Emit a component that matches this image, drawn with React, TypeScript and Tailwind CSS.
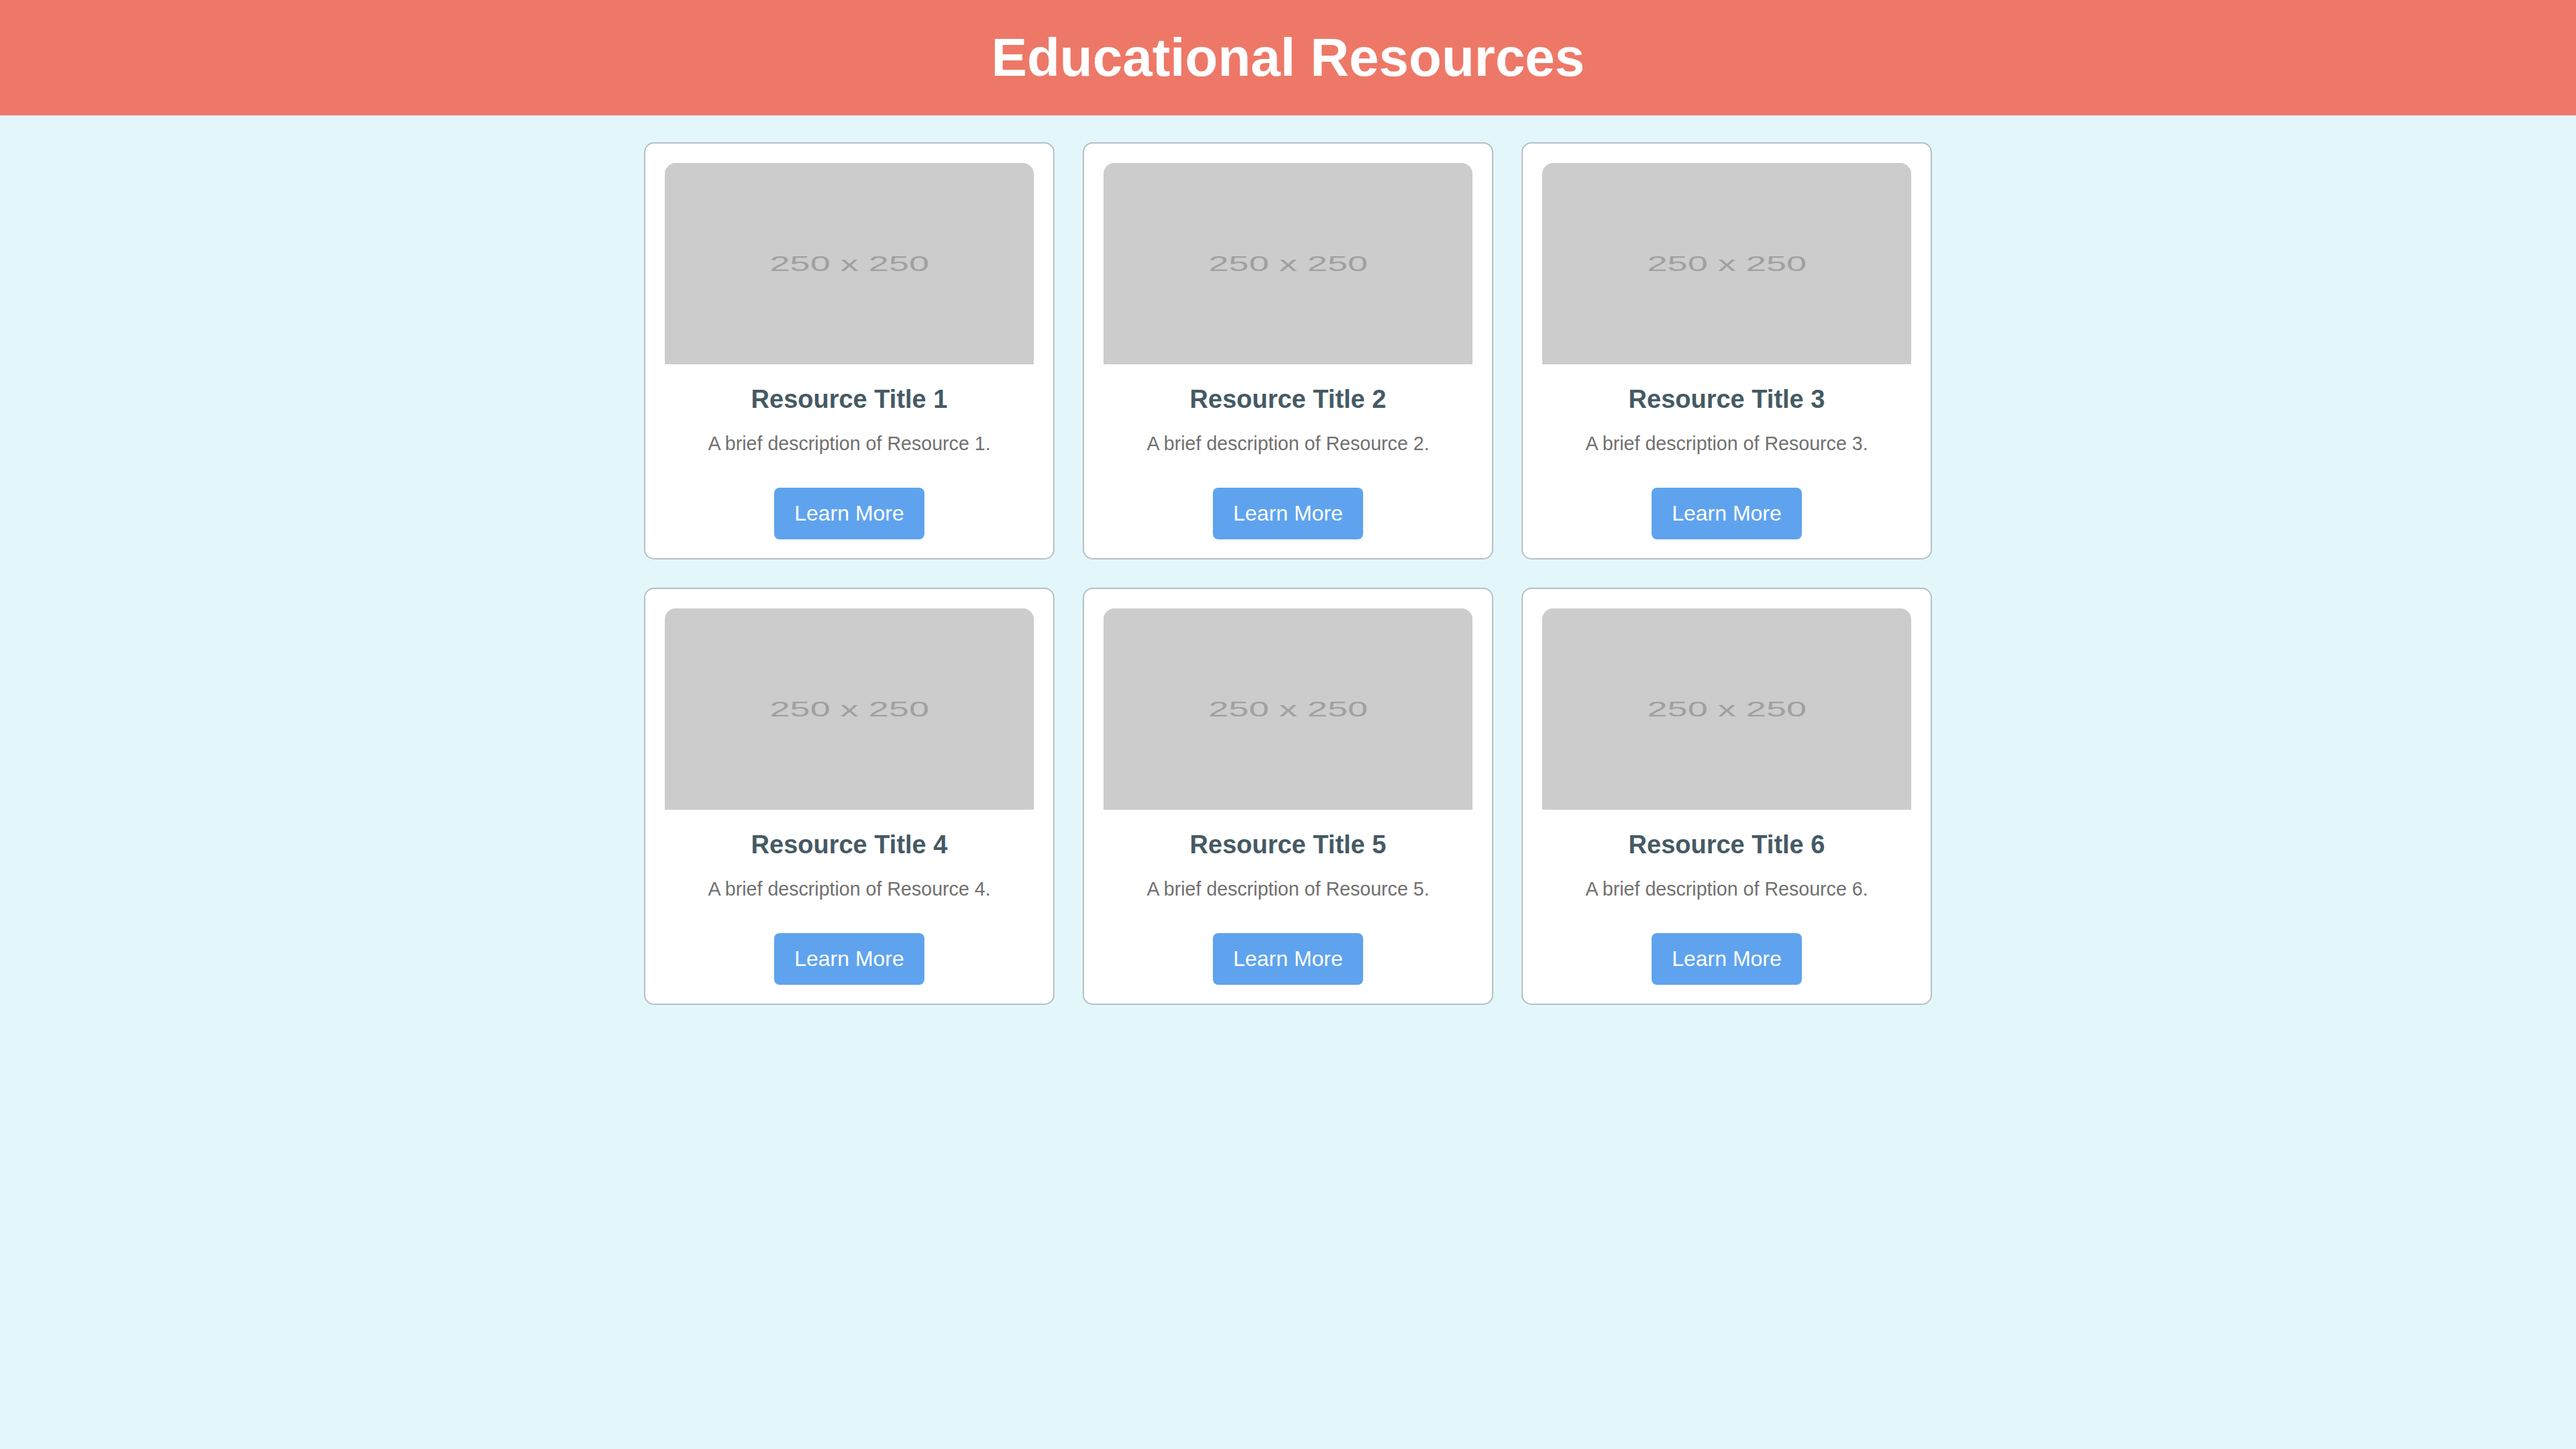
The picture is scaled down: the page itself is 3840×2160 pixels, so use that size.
import React from "react";

const resources = [1, 2, 3, 4, 5, 6];

function Card({ n }: { n: number }) {
  return (
    <div className="bg-white border-2 border-[#b3c0c7] rounded-[15px] px-[29px] pt-[29px] pb-[28px] flex flex-col items-center text-center">
      <div className="w-full h-[300px] bg-[#cccccc] rounded-t-[16px] flex items-center justify-center overflow-hidden">
        <span className="text-[32px] leading-none text-[#a0a0a0] scale-x-[1.69] whitespace-nowrap">
          250 x 250
        </span>
      </div>
      <h3 className="mt-[31px] text-[38px] leading-[normal] font-bold text-[#455a64]">
        Resource Title {n}
      </h3>
      <p className="mt-[28px] text-[28.6px] leading-[normal] text-[#707070]">
        A brief description of Resource {n}.
      </p>
      <button className="mt-[49px] px-[30px] py-[20px] text-[32px] leading-[normal] text-white bg-[#5fa3ee] rounded-[8px]">
        Learn More
      </button>
    </div>
  );
}

export default function App() {
  return (
    <div className="min-h-screen w-full bg-[#e3f6fa] font-['Liberation_Sans',Arial,Helvetica,sans-serif]">
      <header className="bg-[#ee7868] py-[40px] text-center">
        <h1 className="text-[80px] leading-[normal] font-bold text-white">Educational Resources</h1>
      </header>
      <main className="w-[1920px] mx-auto pt-[40px] grid grid-cols-3 gap-[42px]">
        {resources.map((n) => (
          <Card key={n} n={n} />
        ))}
      </main>
    </div>
  );
}
